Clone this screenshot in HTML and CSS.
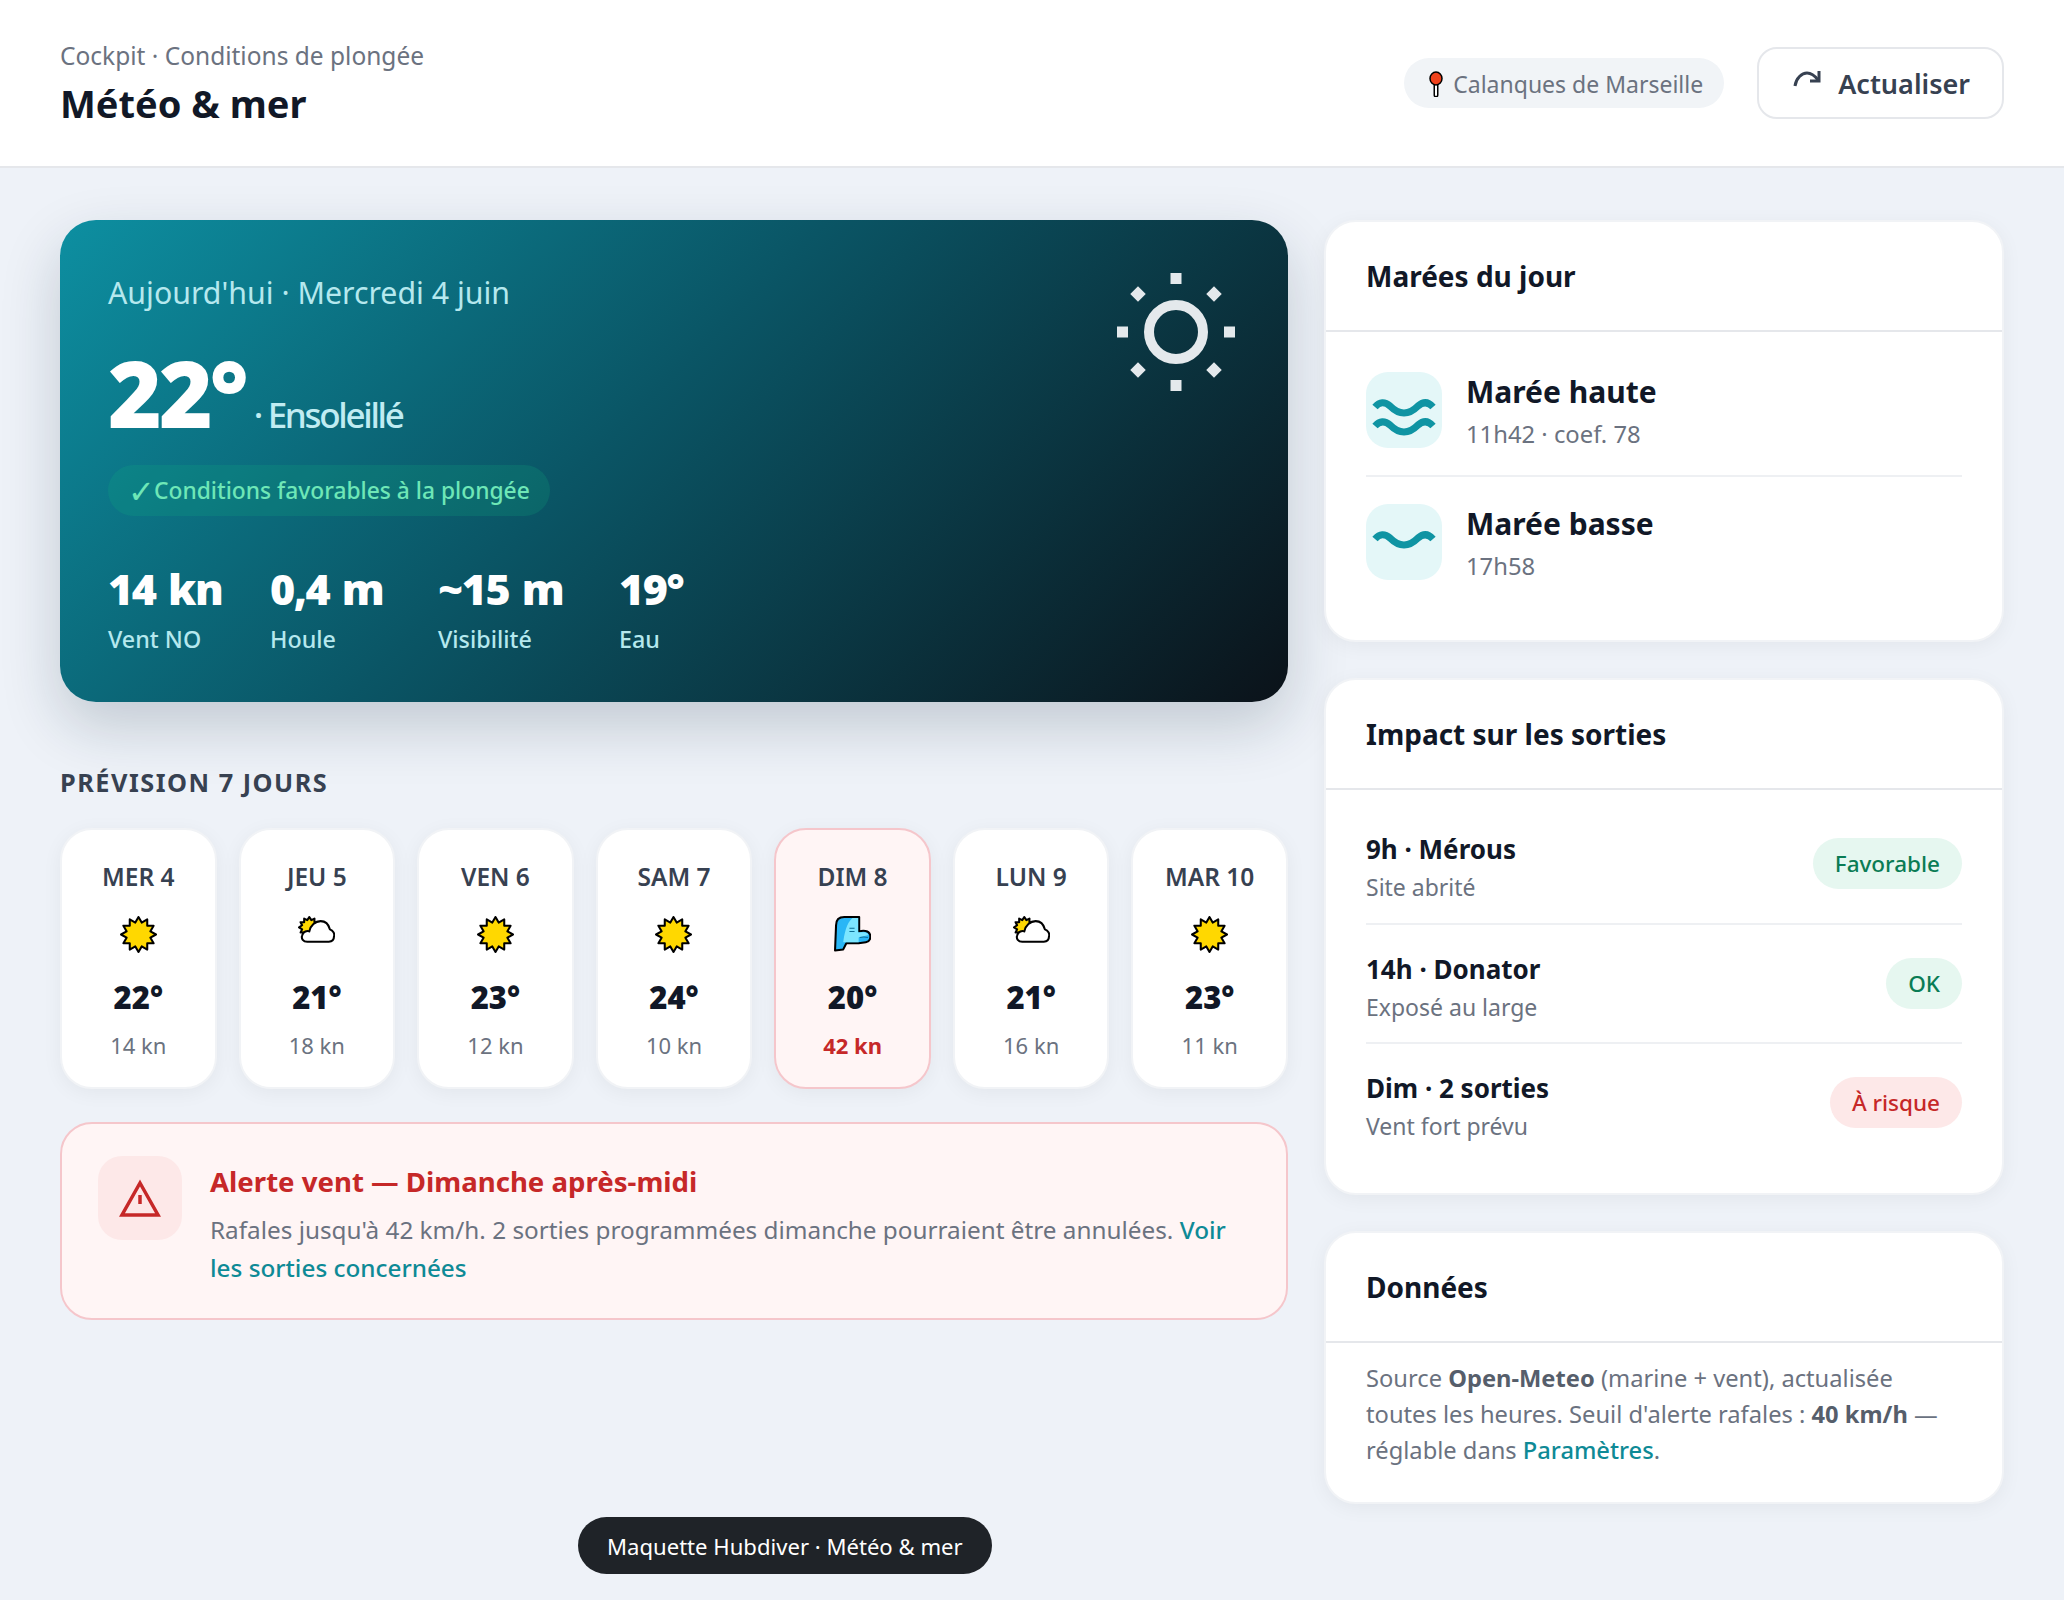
FILE: index.html
```html
<!DOCTYPE html>
<html lang="fr">
<head>
    <meta charset="UTF-8">
    <title>Météo &amp; mer</title>
    <link rel="stylesheet" href="styles.css">
</head>
<body>

    <!-- Shared weather icons -->
    <svg class="defs" width="0" height="0">
        <symbol id="i-sun" viewBox="0 0 36 36">
            <polygon points="18,1 21.1,6.4 26.5,3.3 26.5,9.5 32.7,9.5 29.6,14.9 35,18 29.6,21.1 32.7,26.5 26.5,26.5 26.5,32.7 21.1,29.6 18,35 14.9,29.6 9.5,32.7 9.5,26.5 3.3,26.5 6.4,21.1 1,18 6.4,14.9 3.3,9.5 9.5,9.5 9.5,3.3 14.9,6.4" fill="#ffd800" stroke="#000" stroke-width="2" stroke-linejoin="round"/>
        </symbol>
        <symbol id="i-cloud" viewBox="0 0 36 36">
            <polygon points="11,1 13,4 16,2.500 16,6 19.500,6 18,9 21,11 18,13 19.500,16 16,16 16,19.500 13,18 11,21 9,18 6,19.500 6,16 2.500,16 4,13 1,11 4,9 2.500,6 6,6 6,2.500 9,4" fill="#ffd800" stroke="#000" stroke-width="2" stroke-linejoin="round"/>
            <path d="M9 25 C5 25 3 22 4 19 C5 15 9 14 11 15 C12 9 17 5 22 5 C27 5 30 9 31 13 C34 14 36 17 35 20 C35 23 33 25 30 25 Z" fill="#fff" stroke="#000" stroke-width="2" stroke-linejoin="round"/>
        </symbol>
        <symbol id="i-wind" viewBox="0 0 36 36">
            <path d="M1 33.500 L2 9 C2 4 5 1 10 1 L24.500 1 L24.500 15 C28 14 34 14 35 18 C36 21 35 25 31 25.500 L24 26.500 L12 26.500 L9 32.500 Z" fill="#29b6f6" stroke="#000" stroke-width="2" stroke-linejoin="round"/>
            <path d="M9 25.500 C10 18 12 7 18 2 L23.500 2 L23.500 16 C27 16 32 15 33.500 18.500 L24 21 L24 25.500 L12 25.500 Z" fill="#7ce6ff"/>
            <path d="M15 12 H20 M15 15 H20 M25 21 C28 20 30 20 33 21" stroke="#0c6f96" stroke-width="1" fill="none"/>
        </symbol>
        <symbol id="i-wave" viewBox="0 0 76 76">
            <path d="M9 35 Q16 27 24 34 Q31 41 38 41 Q45 41 52 34 Q60 27 67 35" fill="none" stroke="#0f94a3" stroke-width="7"/>
        </symbol>
    </svg>

    <header class="topbar">
        <div>
            <div class="crumb">Cockpit · Conditions de plongée</div>
            <h1>Météo &amp; mer</h1>
        </div>
        <div class="top-actions">
            <span class="place">
                <svg width="16" height="26" viewBox="0 0 16 26">
                    <path d="M8 13 V24" stroke="#000" stroke-width="5" stroke-linecap="round"/>
                    <path d="M8 13 V24" stroke="#fff" stroke-width="2" stroke-linecap="round"/>
                    <ellipse cx="8" cy="7.500" rx="6" ry="6.500" fill="#f0421c" stroke="#000" stroke-width="1.500"/>
                </svg>
                Calanques de Marseille
            </span>
            <button class="refresh">
                <svg width="30" height="18" viewBox="0 0 30 18">
                    <path d="M3 16 C4 8 10 3 15 3 C19 3 23 6 26 10" fill="none" stroke="#374151" stroke-width="3"/>
                    <path d="M27 1 V11 H18" fill="none" stroke="#374151" stroke-width="3"/>
                </svg>
                Actualiser
            </button>
        </div>
    </header>

    <main class="layout">
        <div class="col-left">
            <section class="hero">
                <div>
                    <div class="hero-date">Aujourd'hui · Mercredi 4 juin</div>
                    <div class="hero-temp"><span class="big">22°</span> <span class="cond">· Ensoleillé</span></div>
                    <span class="fav"><i>✓</i> Conditions favorables à la plongée</span>
                    <div class="stats">
                        <div class="stat"><strong>14 kn</strong><span>Vent NO</span></div>
                        <div class="stat"><strong>0,4 m</strong><span>Houle</span></div>
                        <div class="stat"><strong>~15 m</strong><span>Visibilité</span></div>
                        <div class="stat"><strong>19°</strong><span>Eau</span></div>
                    </div>
                </div>
                <svg class="hero-sun" width="118" height="118" viewBox="0 0 118 118" fill="#e4e9ec">
                    <circle cx="59" cy="59" r="27" fill="none" stroke="#e4e9ec" stroke-width="10"/>
                    <rect x="53.500" y="0" width="11" height="11"/>
                    <rect x="53.500" y="107" width="11" height="11"/>
                    <rect x="0" y="53.500" width="11" height="11"/>
                    <rect x="107" y="53.500" width="11" height="11"/>
                    <rect x="15.500" y="15.500" width="11" height="11" transform="rotate(45 21 21)"/>
                    <rect x="91.500" y="15.500" width="11" height="11" transform="rotate(45 97 21)"/>
                    <rect x="15.500" y="91.500" width="11" height="11" transform="rotate(45 21 97)"/>
                    <rect x="91.500" y="91.500" width="11" height="11" transform="rotate(45 97 97)"/>
                </svg>
            </section>

            <h2 class="section-title">Prévision 7 jours</h2>
            <div class="days">
                <div class="day"><b>MER 4</b><svg width="37" height="37"><use href="#i-sun"/></svg><strong>22°</strong><span>14 kn</span></div>
                <div class="day"><b>JEU 5</b><svg width="37" height="37"><use href="#i-cloud"/></svg><strong>21°</strong><span>18 kn</span></div>
                <div class="day"><b>VEN 6</b><svg width="37" height="37"><use href="#i-sun"/></svg><strong>23°</strong><span>12 kn</span></div>
                <div class="day"><b>SAM 7</b><svg width="37" height="37"><use href="#i-sun"/></svg><strong>24°</strong><span>10 kn</span></div>
                <div class="day windy"><b>DIM 8</b><svg width="37" height="37"><use href="#i-wind"/></svg><strong>20°</strong><span>42 kn</span></div>
                <div class="day"><b>LUN 9</b><svg width="37" height="37"><use href="#i-cloud"/></svg><strong>21°</strong><span>16 kn</span></div>
                <div class="day"><b>MAR 10</b><svg width="37" height="37"><use href="#i-sun"/></svg><strong>23°</strong><span>11 kn</span></div>
            </div>

            <section class="alert">
                <div class="alert-icon">
                    <svg width="42" height="38" viewBox="0 0 42 38">
                        <path d="M21 4 L39 36 H3 Z" fill="none" stroke="#c62828" stroke-width="3.500"/>
                        <path d="M21 16 V25" stroke="#c62828" stroke-width="3.500"/>
                    </svg>
                </div>
                <div>
                    <h3>Alerte vent — Dimanche après-midi</h3>
                    <p>Rafales jusqu'à 42 km/h. 2 sorties programmées dimanche pourraient être annulées. <a href="#">Voir les sorties concernées</a></p>
                </div>
            </section>
        </div>

        <aside class="col-right">
            <section class="card">
                <h2>Marées du jour</h2>
                <div class="tides">
                    <div class="tide">
                        <div class="tide-icon">
                            <svg width="76" height="76" viewBox="0 0 76 76" fill="none" stroke="#0f94a3" stroke-width="7">
                                <path d="M9 35 Q16 27 24 34 Q31 41 38 41 Q45 41 52 34 Q60 27 67 35"/>
                                <path d="M9 54 Q16 46 24 53 Q31 60 38 60 Q45 60 52 53 Q60 46 67 54"/>
                            </svg>
                        </div>
                        <div class="tide-text"><strong>Marée haute</strong><span>11h42 · coef. 78</span></div>
                    </div>
                    <div class="tide">
                        <div class="tide-icon"><svg width="76" height="76"><use href="#i-wave"/></svg></div>
                        <div class="tide-text"><strong>Marée basse</strong><span>17h58</span></div>
                    </div>
                </div>
            </section>

            <section class="card">
                <h2>Impact sur les sorties</h2>
                <div class="trips">
                    <div class="trip">
                        <div class="trip-text"><strong>9h · Mérous</strong><span>Site abrité</span></div>
                        <em class="tag good">Favorable</em>
                    </div>
                    <div class="trip">
                        <div class="trip-text"><strong>14h · Donator</strong><span>Exposé au large</span></div>
                        <em class="tag good">OK</em>
                    </div>
                    <div class="trip">
                        <div class="trip-text"><strong>Dim · 2 sorties</strong><span>Vent fort prévu</span></div>
                        <em class="tag risk">À risque</em>
                    </div>
                </div>
            </section>

            <section class="card">
                <h2>Données</h2>
                <p class="source">Source <b>Open-Meteo</b> (marine + vent), actualisée toutes les heures. Seuil d'alerte rafales : <b>40 km/h</b> — réglable dans <a href="#">Paramètres</a>.</p>
            </section>
        </aside>
    </main>

    <div class="toast">Maquette Hubdiver · Météo &amp; mer</div>

</body>
</html>
```

FILE: styles.css
```css
/* General page */
* {
    box-sizing: border-box;
}

body {
    margin: 0;
    min-height: 1600px;
    background: #eef2f8;
    font-family: "Noto Sans", sans-serif;
    color: #111827;
}

.defs {
    position: absolute;
}

/* Top bar */
.topbar {
    height: 168px;
    padding: 0 60px;
    display: flex;
    justify-content: space-between;
    align-items: center;
    background: #fff;
    border-bottom: 2px solid #e5e7eb;
}

.crumb {
    font-size: 24.500px;
    line-height: 36px;
    color: #6b7280;
}

h1 {
    margin: 4px 0 0;
    font-size: 38px;
    line-height: 50px;
    font-weight: 700;
}

.top-actions {
    display: flex;
    align-items: center;
    gap: 33px;
}

.place {
    height: 50px;
    padding: 2px 21px 0 24px;
    display: flex;
    align-items: center;
    gap: 9px;
    border-radius: 25px;
    background: #f1f4f7;
    font-size: 23px;
    color: #6b7280;
}

.refresh {
    height: 72px;
    padding: 0 32px 0 33px;
    display: flex;
    align-items: center;
    gap: 16px;
    background: #fff;
    border: 2px solid #e5e7eb;
    border-radius: 20px;
    font-family: inherit;
    font-size: 27px;
    font-weight: 600;
    color: #374151;
}

.refresh svg {
    margin-bottom: 8px;
}

/* Two columns */
.layout {
    padding: 52px 60px 0;
    display: grid;
    grid-template-columns: 1fr 680px;
    gap: 36px;
    align-items: start;
}

/* Hero */
.hero {
    height: 482px;
    padding: 51px 48px;
    display: flex;
    justify-content: space-between;
    align-items: flex-start;
    border-radius: 36px;
    background: linear-gradient(135deg, #0d8fa1 0%, #0a5565 45%, #0b1219 100%);
    box-shadow: 0 24px 60px rgba(15, 40, 60, 0.2);
    color: #fff;
}

.hero-sun {
    margin: 2px 5px 0 0;
}

.hero-date {
    font-size: 30.300px;
    line-height: 44px;
    color: #b5e8ee;
}

.hero-temp {
    margin-top: 30px;
    height: 96px;
    display: flex;
    align-items: baseline;
    gap: 8px;
}

.big {
    font-size: 92px;
    line-height: 96px;
    font-weight: 900;
    letter-spacing: -3px;
}

.cond {
    font-size: 35px;
    font-weight: 500;
    letter-spacing: -2.300px;
    color: #c0ecf2;
}

.fav {
    margin-top: 24px;
    height: 51px;
    padding: 0 20px;
    display: inline-flex;
    align-items: center;
    gap: 4px;
    border-radius: 26px;
    background: rgba(16, 185, 129, 0.18);
    font-size: 22.800px;
    font-weight: 500;
    color: #6ee7b7;
}

.fav i {
    width: 22px;
    font-style: normal;
    font-size: 32px;
    line-height: 1;
}

.stats {
    margin-top: 46px;
    display: grid;
    grid-template-columns: 162px 168px 181px auto;
}

.stat strong {
    display: block;
    font-size: 43px;
    line-height: 54px;
    font-weight: 900;
    letter-spacing: -1.500px;
    word-spacing: 3px;
}

.stat span {
    display: block;
    margin-top: 5px;
    font-size: 23.300px;
    line-height: 36px;
    font-weight: 500;
    color: #b5e8ee;
}

/* Forecast */
.section-title {
    margin: 62px 0 28px;
    font-size: 25.300px;
    line-height: 36px;
    font-weight: 700;
    text-transform: uppercase;
    letter-spacing: 1.500px;
    color: #374151;
}

.days {
    display: grid;
    grid-template-columns: repeat(7, 1fr);
    gap: 22px;
}

.day {
    height: 261px;
    padding-top: 29px;
    display: flex;
    flex-direction: column;
    align-items: center;
    background: #fff;
    border: 2px solid #f1f3f6;
    border-radius: 32px;
    box-shadow: 0 4px 20px rgba(0, 0, 0, 0.05);
}

.day b {
    font-size: 24.500px;
    line-height: 36px;
    font-weight: 600;
    color: #374151;
}

.day svg {
    margin-top: 21px;
}

.day strong {
    margin-top: 22px;
    font-size: 31px;
    line-height: 44px;
    font-weight: 900;
}

.day span {
    margin-top: 9px;
    font-size: 22px;
    line-height: 34px;
    color: #6b7280;
}

.windy {
    background: #fff5f5;
    border-color: #f5c6cb;
}

.windy span {
    font-weight: 700;
    color: #c62828;
}

/* Alert */
.alert {
    margin-top: 33px;
    padding: 32px 36px 31px;
    display: flex;
    gap: 28px;
    background: #fff5f5;
    border: 2px solid #f5c6cb;
    border-radius: 32px;
}

.alert-icon {
    flex: none;
    width: 84px;
    height: 84px;
    display: flex;
    align-items: center;
    justify-content: center;
    border-radius: 24px;
    background: #fde8e8;
}

.alert h3 {
    margin: 4px 0 0;
    font-size: 27.600px;
    line-height: 42px;
    font-weight: 700;
    color: #c62828;
}

.alert p {
    margin: 9px 0 0;
    font-size: 24.300px;
    line-height: 38px;
    color: #6b7280;
}

a {
    color: #0e8a96;
    font-weight: 500;
    text-decoration: none;
}

/* Right cards */
.col-right {
    display: flex;
    flex-direction: column;
    gap: 36px;
}

.card {
    background: #fff;
    border: 2px solid #f1f3f6;
    border-radius: 32px;
    box-shadow: 0 4px 20px rgba(0, 0, 0, 0.05);
}

.card h2 {
    margin: 0;
    padding: 33px 40px;
    font-size: 28px;
    line-height: 42px;
    font-weight: 700;
    border-bottom: 2px solid #e5e7eb;
}

.tides {
    padding: 13px 40px 33px;
}

.tide {
    padding: 27px 0;
    display: flex;
    align-items: center;
    gap: 24px;
}

.tide + .tide,
.trip + .trip {
    border-top: 2px solid #eef0f3;
}

.tide-icon {
    flex: none;
    width: 76px;
    height: 76px;
    border-radius: 22px;
    background: #e4f7f8;
}

.tide-icon svg {
    display: block;
}

.tide-text {
    height: 76px;
}

.tide strong {
    display: block;
    font-size: 30px;
    line-height: 40px;
}

.tide span {
    display: block;
    margin-top: 4px;
    font-size: 23.800px;
    line-height: 36px;
    color: #6b7280;
}

.trips {
    padding: 14px 40px 32px;
}

.trip {
    height: 119px;
    display: flex;
    justify-content: space-between;
    align-items: center;
}

.trip-text {
    margin-top: 8px;
}

.trip strong {
    display: block;
    font-size: 26px;
    line-height: 38px;
    font-weight: 700;
}

.trip span {
    display: block;
    font-size: 23px;
    line-height: 38px;
    color: #6b7280;
}

.tag {
    height: 51px;
    padding: 0 22px;
    display: flex;
    align-items: center;
    border-radius: 26px;
    font-style: normal;
    font-size: 22.500px;
    font-weight: 500;
}

.good {
    background: #e6f7f0;
    color: #0a7c55;
}

.risk {
    background: #fde8e8;
    color: #c62828;
}

.source {
    margin: 0;
    padding: 17px 40px 34px;
    font-size: 23.700px;
    line-height: 36px;
    color: #6b7280;
}

.source b {
    font-weight: 700;
    color: #565e6b;
}

/* Toast sits over the page */
.toast {
    position: fixed;
    left: 578px;
    bottom: 26px;
    height: 57px;
    padding: 0 29px;
    display: flex;
    align-items: center;
    border-radius: 29px;
    background: #1f2328;
    font-size: 22.100px;
    color: #fff;
}
```
